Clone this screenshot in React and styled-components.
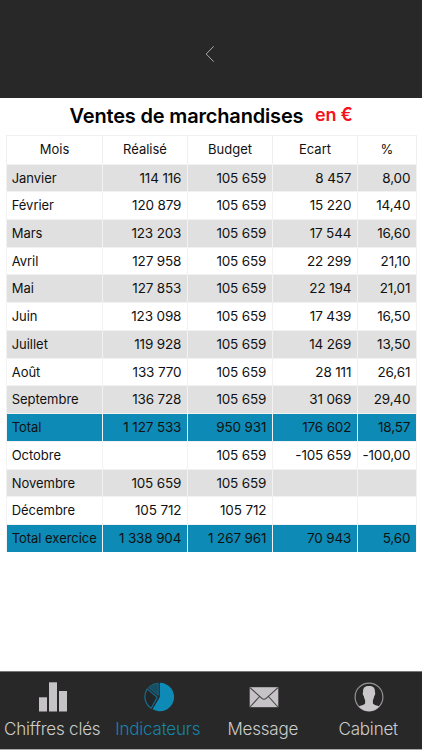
import React from "react";
import styled, { createGlobalStyle } from "styled-components";

const COLUMNS = ["Mois", "Réalisé", "Budget", "Ecart", "%"];

const ROWS = [
  { cells: ["Janvier", "114 116", "105 659", "8 457", "8,00"], tone: "grey" },
  { cells: ["Février", "120 879", "105 659", "15 220", "14,40"] },
  { cells: ["Mars", "123 203", "105 659", "17 544", "16,60"], tone: "grey" },
  { cells: ["Avril", "127 958", "105 659", "22 299", "21,10"] },
  { cells: ["Mai", "127 853", "105 659", "22 194", "21,01"], tone: "grey" },
  { cells: ["Juin", "123 098", "105 659", "17 439", "16,50"] },
  { cells: ["Juillet", "119 928", "105 659", "14 269", "13,50"], tone: "grey" },
  { cells: ["Août", "133 770", "105 659", "28 111", "26,61"] },
  { cells: ["Septembre", "136 728", "105 659", "31 069", "29,40"], tone: "grey" },
  { cells: ["Total", "1 127 533", "950 931", "176 602", "18,57"], tone: "total" },
  { cells: ["Octobre", "", "105 659", "-105 659", "-100,00"] },
  { cells: ["Novembre", "105 659", "105 659", "", ""], tone: "grey" },
  { cells: ["Décembre", "105 712", "105 712", "", ""] },
  { cells: ["Total exercice", "1 338 904", "1 267 961", "70 943", "5,60"], tone: "total" },
];

const TONES = {
  grey: "#e0e0e0",
  total: "#0d8ab5",
};

const BarsIcon = () => (
  <svg width="30" height="30" viewBox="0 0 30 30" fill="#c5c3c5">
    <rect x="1" y="15.3" width="8" height="14.2" />
    <rect x="11" y="0.3" width="8" height="29.2" />
    <rect x="21" y="9" width="8" height="20.5" />
  </svg>
);

const PieIcon = () => (
  <svg width="30" height="30" viewBox="0 0 30 30">
    <path d="M15.8 15V0.8A14.2 14.2 0 1 1 8.6 27.2Z" fill="#0d8ab5" />
    <path d="M14.2 13.4V1.2A13.6 13.6 0 0 0 4.6 5.4Z" fill="#164f64" stroke="#176d8b" strokeWidth="0.8" />
    <path d="M3.3 6.8A13.8 13.8 0 0 0 7.2 26.2L13.2 15.4Z" fill="#222628" stroke="#146e8f" strokeWidth="1.2" />
  </svg>
);

const MailIcon = () => (
  <svg width="30" height="30" viewBox="0 0 30 30">
    <rect x="0.7" y="5.2" width="28.6" height="20" fill="#c5c3c5" />
    <path
      d="M1 5.6L12.6 16.2Q15 18.3 17.4 16.2L29 5.6M1 25L10.6 14.5M29 25L19.4 14.5"
      fill="none"
      stroke="#454345"
      strokeWidth="1.1"
    />
  </svg>
);

const PersonIcon = () => (
  <svg width="30" height="30" viewBox="0 0 30 30">
    <circle cx="15" cy="15" r="13.9" fill="none" stroke="#959395" strokeWidth="1.2" />
    <path
      d="M15 4C10.6 4 8.8 6 9.1 10.2C8.4 10.5 8.8 13.5 9.8 14C10 15.8 10.5 17 11.1 17.9V21.4C10.2 23 6.6 23.2 4.7 24.6A13.8 13.8 0 0 0 25.3 24.6C23.4 23.2 19.8 23 18.9 21.4V17.9C19.5 17 20 15.8 20.2 14C21.2 13.5 21.6 10.5 20.9 10.2C21.2 6 19.4 4 15 4Z"
      fill="#c9c7c9"
    />
  </svg>
);

const TABS = [
  { label: "Chiffres clés", icon: BarsIcon },
  { label: "Indicateurs", icon: PieIcon, active: true },
  { label: "Message", icon: MailIcon },
  { label: "Cabinet", icon: PersonIcon },
];

export default function App() {
  return (
    <>
      <GlobalStyle />
      <Screen>
        <Header>
          <BackButton type="button" aria-label="Retour">
            <svg width="10" height="18" viewBox="0 0 10 18">
              <path d="M8.7 1.3L1.2 9L8.7 16.7" fill="none" stroke="#aaa" strokeWidth="1" />
            </svg>
          </BackButton>
        </Header>
        <Content>
          <TitleBar>
            <Title>Ventes de marchandises</Title>
            <Unit>en €</Unit>
          </TitleBar>
          <Table>
            <thead>
              <HeadRow>
                {COLUMNS.map((name) => (
                  <HeadCell key={name}>{name}</HeadCell>
                ))}
              </HeadRow>
            </thead>
            <tbody>
              {ROWS.map((row) => (
                <Row key={row.cells[0]} $tone={row.tone}>
                  {row.cells.map((value, i) => (
                    <Cell key={COLUMNS[i]}>{value}</Cell>
                  ))}
                </Row>
              ))}
            </tbody>
          </Table>
        </Content>
        <TabBar>
          {TABS.map(({ label, icon: Icon, active }) => (
            <Tab key={label} $active={active}>
              <Icon />
              <TabLabel>{label}</TabLabel>
            </Tab>
          ))}
        </TabBar>
      </Screen>
    </>
  );
}

const GlobalStyle = createGlobalStyle`
  * {
    box-sizing: border-box;
  }

  body {
    margin: 0;
    background: #fff;
    font-family: Inter, "Liberation Sans", sans-serif;
  }
`;

const Screen = styled.div`
  display: flex;
  flex-direction: column;
  width: 422px;
  height: 750px;
  overflow: hidden;
  background: #fff;
`;

const Header = styled.header`
  display: flex;
  flex: none;
  justify-content: center;
  height: 98px;
  padding-top: 45px;
  background: #282828;
`;

const BackButton = styled.button`
  display: block;
  width: 10px;
  height: 18px;
  margin-right: 2px;
  padding: 0;
  border: 0;
  background: none;

  svg {
    display: block;
  }
`;

const Content = styled.main`
  flex: 1;
  padding: 0 5px 0 6px;
`;

const TitleBar = styled.div`
  display: flex;
  height: 37px;
  padding: 5px 0 0 63.5px;
  white-space: nowrap;
`;

const Title = styled.h1`
  width: 245.5px;
  margin: 0;
  font-size: 20px;
  font-weight: 600;
  line-height: 27px;
  letter-spacing: -0.17px;
  color: #000;
`;

const Unit = styled.span`
  font-size: 18px;
  font-weight: 600;
  line-height: 24px;
  letter-spacing: -0.2px;
  color: #f5121a;
`;

const Table = styled.table`
  display: block;
  width: 411px;
  border-spacing: 0;
  font-size: 13.5px;
  color: #111;

  thead,
  tbody {
    display: block;
  }
`;

const HeadRow = styled.tr`
  display: grid;
  grid-template-columns: 96px 85px 85px 85px 59px;
  height: 28.5px;
  border-top: 1px solid #f0f0f0;
  border-left: 1px solid #f0f0f0;
`;

const HeadCell = styled.th`
  padding: 0;
  border-right: 1px solid #efefef;
  font-size: 13px;
  font-weight: 400;
  line-height: 27px;
  text-align: center;
`;

const Row = styled.tr`
  display: grid;
  grid-template-columns: 96px 85px 85px 85px 59px;
  height: 27.74px;
  border-top: 1px solid #f2f2f2;
  border-left: 1px solid #f2f2f2;
  background: ${(props) => TONES[props.$tone] || "#fff"};
`;

const Cell = styled.td`
  padding: 0 5.7px 0 0;
  border-right: 1px solid #f2f2f2;
  line-height: 26px;
  letter-spacing: -0.15px;
  text-align: right;
  white-space: nowrap;

  &:first-child {
    padding: 0 0 0 4.7px;
    font-size: 13px;
    letter-spacing: -0.03px;
    text-align: left;
  }
`;

const TabBar = styled.nav`
  display: grid;
  flex: none;
  grid-template-columns: 106px 105px 105px 106px;
  height: 79px;
  border-top: 1px solid #777;
  border-bottom: 1px solid #aaa;
  background: #282828;
`;

const Tab = styled.div`
  display: flex;
  flex-direction: column;
  align-items: center;
  padding-top: 10px;
  color: ${(props) => (props.$active ? "#1783aa" : "#cdcdcd")};
`;

const TabLabel = styled.span`
  margin: 4px 1.5px 0 0;
  font-size: 17px;
  font-weight: 300;
  line-height: 26px;
  letter-spacing: -0.2px;
  white-space: nowrap;
`;
